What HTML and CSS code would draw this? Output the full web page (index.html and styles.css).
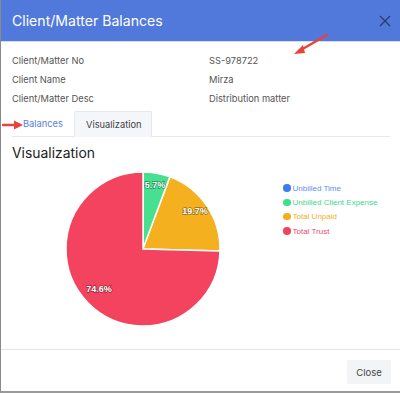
FILE: index.html
```html
<!DOCTYPE html>
<html>
<head>
<meta charset="utf-8">
<link rel="stylesheet" href="styles.css">
</head>
<body>
<div class="modal">
  <div class="header">
    <div class="title">Client/Matter Balances</div>
    <svg class="close-x" width="12" height="12" viewBox="0 0 12 12"><path d="M1 1 L11 11 M11 1 L1 11" stroke="#2c3d6b" stroke-width="1.4" fill="none"/></svg>
  </div>
  <div class="info">
    <div class="row"><span class="label">Client/Matter No</span><span class="value">SS-978722</span></div>
    <div class="row"><span class="label">Client Name</span><span class="value">Mirza</span></div>
    <div class="row"><span class="label">Client/Matter Desc</span><span class="value">Distribution matter</span></div>
  </div>
  <div class="tabs">
    <div class="tab link">Balances</div>
    <div class="tab active">Visualization</div>
  </div>
  <div class="content">
    <h2 class="heading">Visualization</h2>
    <div class="chart">
      <svg class="pie" width="262" height="168" viewBox="0 0 262 168">
        <path d="M130 82 L130 5 A77 77 0 0 1 156.99 9.88 Z" fill="#47e091" stroke="#fff" stroke-width="1.5"/>
        <path d="M130 82 L156.99 9.88 A77 77 0 0 1 206.98 83.94 Z" fill="#f5b020" stroke="#fff" stroke-width="1.5"/>
        <path d="M130 82 L206.98 83.94 A77 77 0 1 1 130 5 Z" fill="#f4435f" stroke="#fff" stroke-width="1.5"/>
        <g class="plabel">
          <text x="142" y="21">5.7%</text>
          <text x="182" y="47">19.7%</text>
          <text x="86" y="125">74.6%</text>
        </g>
      </svg>
      <div class="legend">
        <div class="item blue"><span class="dot"></span>Unbilled Time</div>
        <div class="item green"><span class="dot"></span>Unbilled Client Expense</div>
        <div class="item orange"><span class="dot"></span>Total Unpaid</div>
        <div class="item red"><span class="dot"></span>Total Trust</div>
      </div>
    </div>
  </div>
  <div class="footer">
    <button class="btn">Close</button>
  </div>
  <svg class="arrow arrow-top" width="40" height="24" viewBox="0 0 40 24"><path d="M36 2 L8 18" stroke="#e8433a" stroke-width="2.5" stroke-linecap="round"/><path d="M3 21 L12 12 L14 20 Z" fill="#e8433a"/></svg>
  <svg class="arrow arrow-left" width="22" height="10" viewBox="0 0 22 10"><path d="M1 5 L14 5" stroke="#e8433a" stroke-width="2.5" stroke-linecap="round"/><path d="M21 5 L12 0.5 L12 9.5 Z" fill="#e8433a"/></svg>
</div>
</body>
</html>
```

FILE: styles.css
```css
* { box-sizing: border-box; }
body { margin: 0; font-family: Inter, "Noto Sans", sans-serif; background: #fff; }
.modal {
  position: relative;
  width: 400px;
  height: 393px;
  border-left: 1px solid #8a8a8a;
  border-bottom: 2px solid #9a9a9a;
  display: flex;
  flex-direction: column;
  background: #fff;
}
.header {
  height: 42px;
  background: #5179dc;
  border-bottom: 1px solid #d5dcef;
  display: flex;
  align-items: center;
  justify-content: space-between;
  padding: 0 9px 0 11px;
}
.title { color: #fff; font-size: 14.1px; font-weight: 400; }
.close-x { display: block; }
.info { padding: 9px 12px 0 11px; }
.row { display: flex; height: 19px; align-items: center; font-size: 9.3px; color: #555; }
.label { width: 197px; }
.tabs {
  margin: 3px 10px 0 11px;
  display: flex;
  border-bottom: 1px solid #e6e8ec;
  height: 26px;
}
.tab { font-size: 9.3px; display: flex; align-items: center; }
.tab.link { color: #5a7de0; padding: 0 11px 0 11px; width: 62px; }
.tab.active {
  color: #444;
  background: #f5f6f9;
  border: 1px solid #e6e8ec;
  border-bottom: none;
  border-radius: 2px 2px 0 0;
  margin-bottom: -1px;
  padding: 0 11px;
  width: 78px;
}
.content { flex: 1; padding: 0 11px; }
.heading { margin: 6px 0 0; font-size: 13.9px; font-weight: 400; color: #222; line-height: 20px; }
.chart { display: flex; margin-top: 4px; }
.pie { display: block; flex: none; margin-left: 1px; }
.plabel text {
  font-family: "Liberation Sans", Arial, sans-serif;
  font-size: 9px;
  font-weight: 700;
  fill: #fff;
  text-anchor: middle;
  paint-order: stroke;
  stroke: rgba(0,0,0,0.4);
  stroke-width: 1.4px;
}
.legend { margin-left: 8px; margin-top: 14px; font-family: "Liberation Sans", Arial, sans-serif; font-size: 8px; }
.item { display: flex; align-items: center; height: 14.3px; }
.dot { width: 7.5px; height: 7.5px; border-radius: 50%; margin-right: 2px; }
.blue { color: #5f8ff2; } .blue .dot { background: #3d7cf0; }
.green { color: #3fd98b; } .green .dot { background: #3fe08c; }
.orange { color: #f2ad2a; } .orange .dot { background: #f5ae1c; }
.red { color: #f04a6c; } .red .dot { background: #f4435f; }
.footer {
  border-top: 1px solid #e5e5e5;
  height: 42px;
  display: flex;
  justify-content: flex-end;
  align-items: flex-start;
  padding: 10px 9px 0 0;
}
.btn {
  font-family: Inter, "Noto Sans", sans-serif;
  font-size: 9.5px;
  color: #444;
  background: #f3f4f6;
  border: none;
  border-radius: 2px;
  width: 44px;
  height: 24px;
}
.arrow { position: absolute; }
.arrow-top { left: 290px; top: 33px; }
.arrow-left { left: 1px; top: 120px; }
```
